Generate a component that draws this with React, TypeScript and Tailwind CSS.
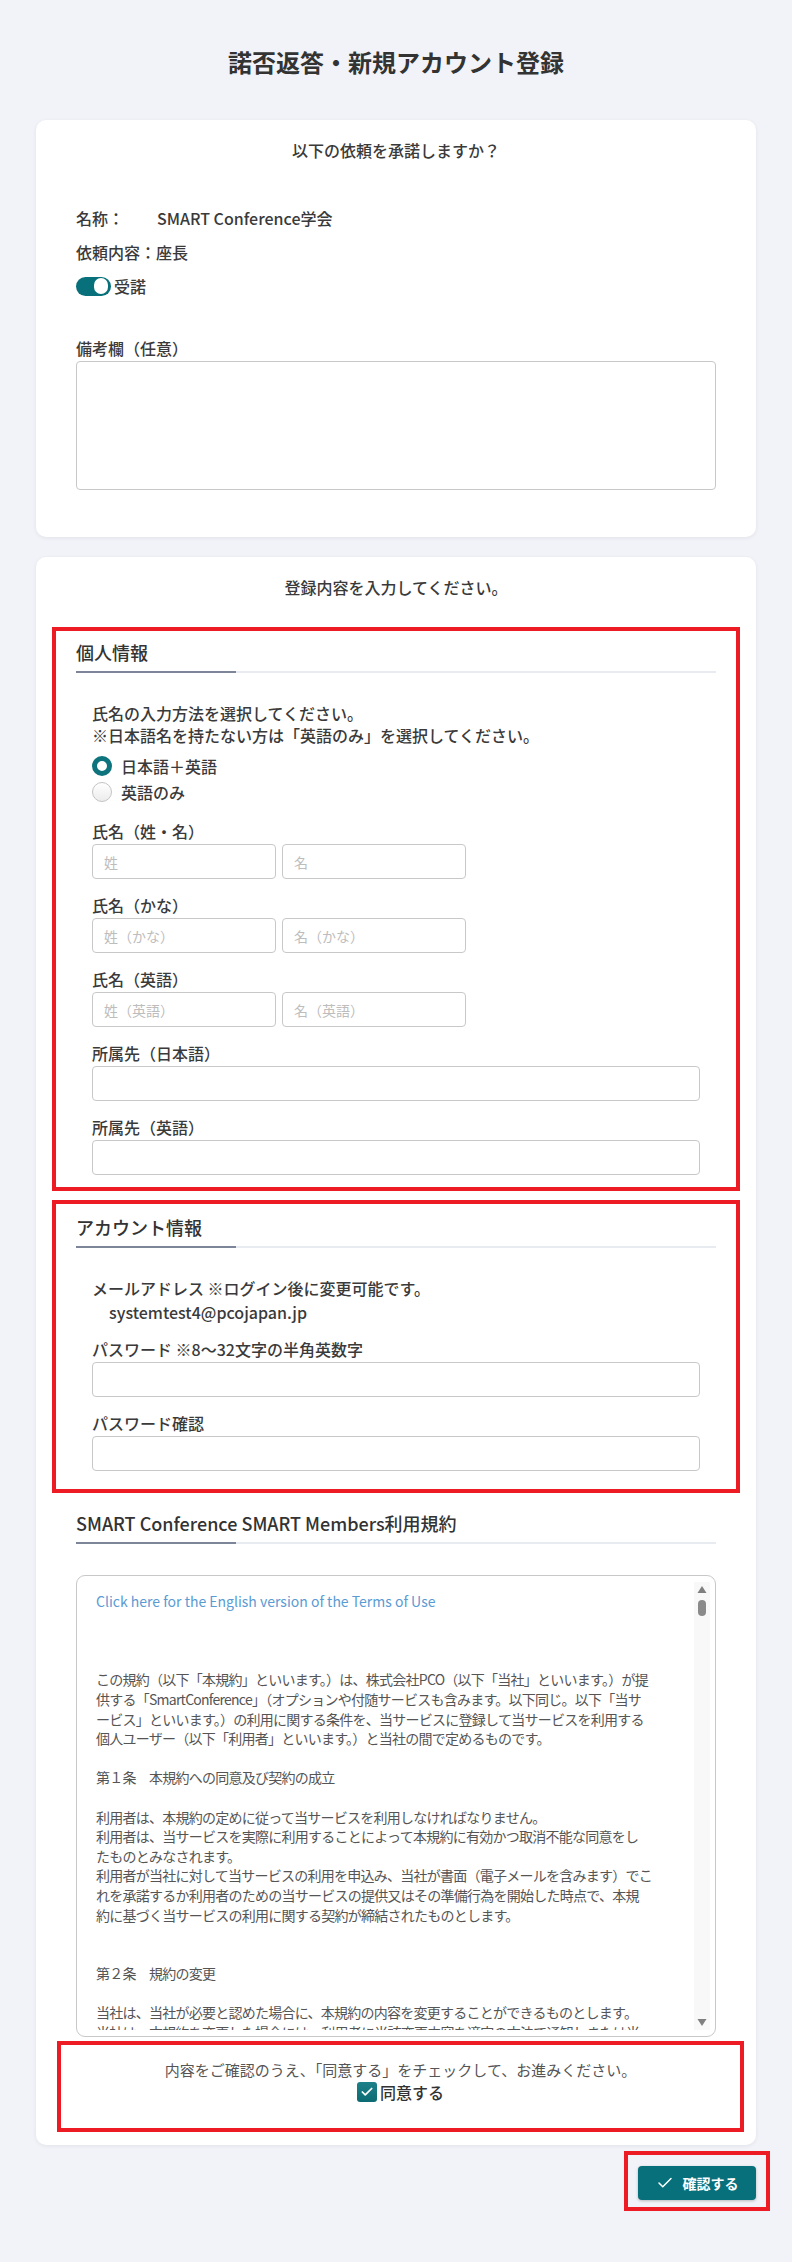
import { Check } from 'lucide-react'

function SectionHeading({ text }: { text: string }) {
  return (
    <div>
      <h3 className="text-[18px] leading-[28px] font-medium text-[#333]">{text}</h3>
      <div className="mt-[5px] flex h-[2px]">
        <div className="w-[160px] bg-[#7c8698]" />
        <div className="flex-1 bg-[#e8ecf1]" />
      </div>
    </div>
  )
}

function Label({ text }: { text: string }) {
  return <label className="block text-[16px] leading-[24px] font-medium text-[#3a3a3a]">{text}</label>
}

function TextInput({ placeholder = '', wide = false }: { placeholder?: string; wide?: boolean }) {
  return (
    <input
      placeholder={placeholder}
      className={
        wide
          ? 'block h-[35px] w-full rounded-[4px] border border-[#c8c8c8] bg-white px-[11px] text-[14px] outline-none placeholder:text-[#bdbdbd]'
          : 'block h-[35px] w-[184px] rounded-[4px] border border-[#c8c8c8] bg-white px-[11px] text-[14px] outline-none placeholder:text-[#bdbdbd]'
      }
    />
  )
}

function NamePair({ label, first, last }: { label: string; first: string; last: string }) {
  return (
    <div className="mt-[14px]">
      <Label text={label} />
      <div className="mt-[1px] flex gap-[6px]">
        <TextInput placeholder={first} />
        <TextInput placeholder={last} />
      </div>
    </div>
  )
}

function WideField({ label }: { label: string }) {
  return (
    <div className="mt-[14px]">
      <Label text={label} />
      <div className="mt-[1px]">
        <TextInput wide />
      </div>
    </div>
  )
}

const terms = [
  '',
  '',
  '',
  'この規約（以下「本規約」といいます。）は、株式会社PCO（以下「当社」といいます。）が提',
  '供する「SmartConference」（オプションや付随サービスも含みます。以下同じ。以下「当サ',
  'ービス」といいます。）の利用に関する条件を、当サービスに登録して当サービスを利用する',
  '個人ユーザー（以下「利用者」といいます。）と当社の間で定めるものです。',
  '',
  '第１条　本規約への同意及び契約の成立',
  '',
  '利用者は、本規約の定めに従って当サービスを利用しなければなりません。',
  '利用者は、当サービスを実際に利用することによって本規約に有効かつ取消不能な同意をし',
  'たものとみなされます。',
  '利用者が当社に対して当サービスの利用を申込み、当社が書面（電子メールを含みます）でこ',
  'れを承諾するか利用者のための当サービスの提供又はその準備行為を開始した時点で、本規',
  '約に基づく当サービスの利用に関する契約が締結されたものとします。',
  '',
  '',
  '第２条　規約の変更',
  '',
  '当社は、当社が必要と認めた場合に、本規約の内容を変更することができるものとします。',
  '当社は、本規約を変更した場合には、利用者に当該変更内容を適宜の方法で通知しまたは当',
]

export default function App() {
  return (
    <div className="min-h-screen bg-[#f1f3f8] pb-[49px] font-['Noto_Sans_CJK_JP',sans-serif] text-[#3a3a3a]">
      <div className="mx-auto w-[720px]">
        <h1 className="pt-[46px] text-center text-[24px] leading-[32px] font-bold text-[#333]">
          諾否返答・新規アカウント登録
        </h1>

        {/* 諾否 */}
        <section className="mt-[42px] rounded-[10px] bg-white px-10 pt-[18px] pb-[47px] shadow-[0_1px_4px_rgba(0,0,0,0.07)]">
          <p className="text-center text-[16px] leading-[24px] font-medium">以下の依頼を承諾しますか？</p>
          <div className="mt-[44px] flex flex-col gap-[10px] text-[16px] leading-[24px] font-medium">
            <div className="flex">
              <span className="w-[81px]">名称：</span>
              <span>SMART Conference学会</span>
            </div>
            <div>依頼内容：座長</div>
            <div className="flex h-[24px] items-center">
              <div className="flex h-[19px] w-[35px] items-center justify-end rounded-full bg-[#08707a] pr-[3px]">
                <div className="h-[16px] w-[14px] rounded-full bg-white" />
              </div>
              <span className="ml-[3px]">受諾</span>
            </div>
          </div>
          <div className="mt-[38px]">
            <Label text="備考欄（任意）" />
            <textarea className="mt-[1px] block h-[129px] w-full resize-none rounded-[4px] border border-[#c8c8c8] outline-none" />
          </div>
        </section>

        {/* 登録内容 */}
        <section className="mt-[20px] rounded-[10px] bg-white px-10 pt-[18px] pb-[13px] shadow-[0_1px_4px_rgba(0,0,0,0.07)]">
          <p className="text-center text-[16px] leading-[24px] font-medium">登録内容を入力してください。</p>

          <div className="-mx-6 mt-[28px] border-4 border-[#ed1c24] px-5 pt-[7px] pb-[12px]">
            <SectionHeading text="個人情報" />
            <div className="px-4">
              <p className="mt-[29px] text-[16px] leading-[22px] font-medium">
                氏名の入力方法を選択してください。
                <br />
                ※日本語名を持たない方は「英語のみ」を選択してください。
              </p>
              <div className="mt-[7px] text-[16px] font-medium">
                <div className="flex h-[26px] items-center gap-[9px]">
                  <span className="h-[20px] w-[20px] rounded-full border-[5px] border-[#0d737c] bg-white" />
                  <span>日本語＋英語</span>
                </div>
                <div className="flex h-[26px] items-center gap-[9px]">
                  <span className="h-[20px] w-[20px] rounded-full border border-[#c4c4c4] bg-gradient-to-b from-white to-[#ececec]" />
                  <span>英語のみ</span>
                </div>
              </div>
              <div className="mt-[1px]">
                <NamePair label="氏名（姓・名）" first="姓" last="名" />
              </div>
              <NamePair label="氏名（かな）" first="姓（かな）" last="名（かな）" />
              <NamePair label="氏名（英語）" first="姓（英語）" last="名（英語）" />
              <WideField label="所属先（日本語）" />
              <WideField label="所属先（英語）" />
            </div>
          </div>

          <div className="-mx-6 mt-[9px] border-4 border-[#ed1c24] px-5 pt-[9px] pb-[18px]">
            <SectionHeading text="アカウント情報" />
            <div className="px-4">
              <div className="mt-[28px] text-[16px] leading-[24px] font-medium">
                <p>メールアドレス ※ログイン後に変更可能です。</p>
                <p className="pl-[17px]">systemtest4@pcojapan.jp</p>
              </div>
              <div className="mt-[-1px]">
                <WideField label="パスワード ※8〜32文字の半角英数字" />
              </div>
              <WideField label="パスワード確認" />
            </div>
          </div>

          <div className="mt-[16px]">
            <SectionHeading text="SMART Conference SMART Members利用規約" />
          </div>

          {/* 利用規約 */}
          <div className="mt-[31px] flex h-[462px] rounded-[9px] border border-[#c8c8c8] bg-white py-[6px] pr-[5px] pl-[6px]">
            <div className="min-w-0 flex-1 overflow-hidden pt-[10px] pl-[13px] text-[14px] leading-[19.6px] text-[#555]">
              <p className="whitespace-nowrap text-[#5a9bd3]">Click here for the English version of the Terms of Use</p>
              {terms.map((line, i) => (
                <p key={i} className="h-[19.6px] whitespace-nowrap tracking-[-0.75px]">
                  {line}
                </p>
              ))}
            </div>
            <div className="flex w-[16px] flex-col items-center bg-[#f8f8f8]">
              <svg width="16" height="15" viewBox="0 0 16 15">
                <path d="M3.5 11 L8 4 L12.5 11 Z" fill="#7f7f7f" />
              </svg>
              <div className="mt-[3px] h-[16px] w-[8px] rounded-full bg-[#8a8a8a]" />
              <div className="flex-1" />
              <svg width="16" height="15" viewBox="0 0 16 15">
                <path d="M3.5 4 L8 11 L12.5 4 Z" fill="#7f7f7f" />
              </svg>
            </div>
          </div>

          <div className="mt-[4px] ml-[-19px] mr-[-28px] border-4 border-[#ed1c24] pt-[14px] pb-[25px] text-center">
            <p className="text-[15px] leading-[22px] text-[#555]">
              内容をご確認のうえ、「同意する」をチェックして、お進みください。
            </p>
            <div className="flex h-[22px] items-center justify-center gap-[3px]">
              <span className="flex h-[20px] w-[20px] items-center justify-center rounded-[3px] bg-gradient-to-b from-[#1d8189] to-[#0b6a72]">
                <Check className="h-[14px] w-[14px] text-white" strokeWidth={3} />
              </span>
              <span className="text-[16px] font-medium text-[#333]">同意する</span>
            </div>
          </div>
        </section>

        <div className="mt-[6px] flex justify-end">
          <div className="-mr-[14px] border-4 border-[#ed1c24] px-[10px] pt-[11px] pb-[7px]">
            <button className="flex h-[34px] w-[118px] items-center justify-center gap-[9px] rounded-[4px] bg-[#07707a] text-[14px] font-bold text-white shadow-[0_1px_3px_rgba(0,0,0,0.25)]">
              <Check className="h-[18px] w-[18px]" strokeWidth={2} />
              確認する
            </button>
          </div>
        </div>
      </div>
    </div>
  )
}
